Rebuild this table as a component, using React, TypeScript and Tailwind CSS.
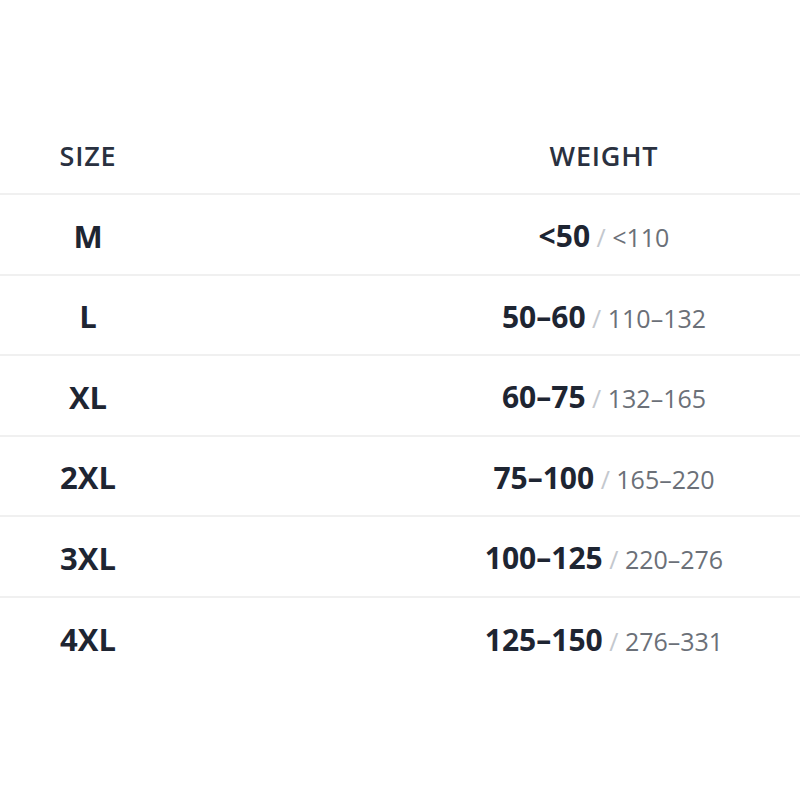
import React from 'react';

const rows = [
  { size: 'M', kg: '<50', lb: '<110' },
  { size: 'L', kg: '50–60', lb: '110–132' },
  { size: 'XL', kg: '60–75', lb: '132–165' },
  { size: '2XL', kg: '75–100', lb: '165–220' },
  { size: '3XL', kg: '100–125', lb: '220–276' },
  { size: '4XL', kg: '125–150', lb: '276–331' },
];

export default function App() {
  return (
    <div
      className="w-[800px] h-[800px] overflow-hidden bg-white pt-[116px]"
      style={{ fontFamily: '"Open Sans", "Noto Sans", sans-serif' }}
    >
      <div className="w-[1032px]">
        <div className="flex h-[79px] items-center border-b-2 border-[#f0f0f0] pt-[4px]">
          <div className="w-[176px] text-center text-[27px] font-semibold tracking-[0.03em] text-[#2a3140]">SIZE</div>
          <div className="flex-1 text-center text-[27px] font-semibold tracking-[0.03em] text-[#2a3140]">WEIGHT</div>
        </div>
        {rows.map((r, i) => (
          <div
            key={r.size}
            className={
              'flex h-[80.5px] items-center pt-[3px] ' + (i < rows.length - 1 ? 'border-b-2 border-[#f0f0f0]' : '')
            }
          >
            <div className="w-[176px] text-center text-[31px] font-bold text-[#1e2532]">{r.size}</div>
            <div className="flex-1 text-center">
              <span className="text-[30px] font-bold text-[#1e2532]">{r.kg}</span>
              <span className="text-[25px] text-[#c4c8ce]"> / </span>
              <span className="text-[25px] text-[#6b7078]">{r.lb}</span>
            </div>
          </div>
        ))}
      </div>
    </div>
  );
}
